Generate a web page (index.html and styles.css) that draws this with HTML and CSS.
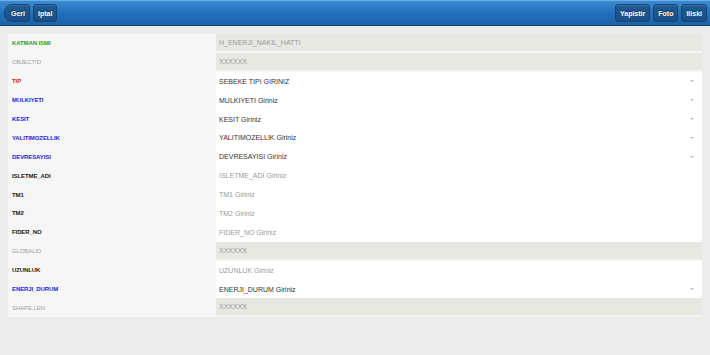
FILE: index.html
```html
<!DOCTYPE html>
<html>
<head>
<meta charset="utf-8">
<link rel="stylesheet" href="styles.css">
</head>
<body>
<header class="bar">
  <div class="group">
    <button class="btn back">Geri</button>
    <button class="btn">Iptal</button>
  </div>
  <div class="group">
    <button class="btn">Yapistir</button>
    <button class="btn">Foto</button>
    <button class="btn">Iliski</button>
  </div>
</header>
<main class="content">
  <div class="form">
    <div class="lbl green">KATMAN ISMI</div><div class="val dis">H_ENERJI_NAKIL_HATTI</div>
    <div class="lbl gray">OBJECTID</div><div class="val dis">XXXXXX</div>
    <div class="lbl red">TIP</div><div class="val sel">SEBEKE TIPI GIRINIZ<span class="arr"></span></div>
    <div class="lbl blue">MULKIYETI</div><div class="val sel">MULKIYETI Giriniz<span class="arr"></span></div>
    <div class="lbl blue">KESIT</div><div class="val sel">KESIT Giriniz<span class="arr"></span></div>
    <div class="lbl blue">YALITIMOZELLIK</div><div class="val sel">YALITIMOZELLIK Giriniz<span class="arr"></span></div>
    <div class="lbl blue">DEVRESAYISI</div><div class="val sel">DEVRESAYISI Giriniz<span class="arr"></span></div>
    <div class="lbl black">ISLETME_ADI</div><div class="val ph">ISLETME_ADI Giriniz</div>
    <div class="lbl black">TM1</div><div class="val ph">TM1 Giriniz</div>
    <div class="lbl black">TM2</div><div class="val ph">TM2 Giriniz</div>
    <div class="lbl black">FIDER_NO</div><div class="val ph">FIDER_NO Giriniz</div>
    <div class="lbl gray">GLOBALID</div><div class="val dis">XXXXXX</div>
    <div class="lbl black">UZUNLUK</div><div class="val ph">UZUNLUK Giriniz</div>
    <div class="lbl blue">ENERJI_DURUM</div><div class="val sel">ENERJI_DURUM Giriniz<span class="arr"></span></div>
    <div class="lbl gray">SHAPE.LEN</div><div class="val dis">XXXXXX</div>
  </div>
</main>
</body>
</html>
```
FILE: styles.css
```css
* { box-sizing: border-box; }
html, body { margin: 0; padding: 0; }
body {
  background: #ececec;
  font-family: "Liberation Sans", Arial, sans-serif;
  width: 710px;
  height: 355px;
  overflow: hidden;
}
.bar {
  height: 26px;
  display: flex;
  justify-content: space-between;
  align-items: center;
  padding: 0 3px 0 4px;
  background: linear-gradient(#3b8bd2, #2270bb 50%, #1c63a8);
  border-top: 1px solid #6aaee6;
  border-bottom: 1px solid #10406e;
}
.group { display: flex; gap: 3px; }
.btn {
  font-family: "Liberation Sans", Arial, sans-serif;
  font-size: 7px;
  font-weight: bold;
  color: #fff;
  height: 18px;
  padding: 0 4px;
  background: linear-gradient(#1f5a93, #1a4f85);
  border: 1px solid #164675;
  border-radius: 3px;
  text-shadow: 0 -1px 0 #0e3358;
  box-shadow: inset 0 1px 0 rgba(255,255,255,0.12);
}
.btn.back {
  padding-left: 6px;
  border-radius: 8px 3px 3px 8px;
}
.content {
  padding: 8px 8px 0 8px;
}
.form {
  display: grid;
  grid-template-columns: 208px 486px;
  grid-auto-rows: 18.9px;
  background: #f6f6f6;
}
.lbl {
  display: flex;
  align-items: center;
  padding-left: 4px;
  font-size: 6px;
  font-weight: bold;
  letter-spacing: -0.1px;
  background: #f6f6f6;
}
.green { color: #2f9a2f; }
.gray { color: #a0a0a0; font-weight: normal; }
.red { color: #e02020; }
.blue { color: #2424d6; }
.black { color: #1a1a1a; }
.val {
  position: relative;
  display: flex;
  align-items: center;
  padding-left: 3px;
  font-size: 7px;
  background: #fff;
  color: #333;
}
.val.dis {
  background: #e8e8e3;
  color: #9a9a9a;
  border-bottom: 2px solid #f4f4f0;
}
.val.ph { color: #9a9a9a; }
.arr {
  position: absolute;
  right: 8px;
  top: 50%;
  margin-top: -1px;
  width: 0;
  height: 0;
  border-left: 2px solid transparent;
  border-right: 2px solid transparent;
  border-top: 2px solid #bdbdbd;
}
```
